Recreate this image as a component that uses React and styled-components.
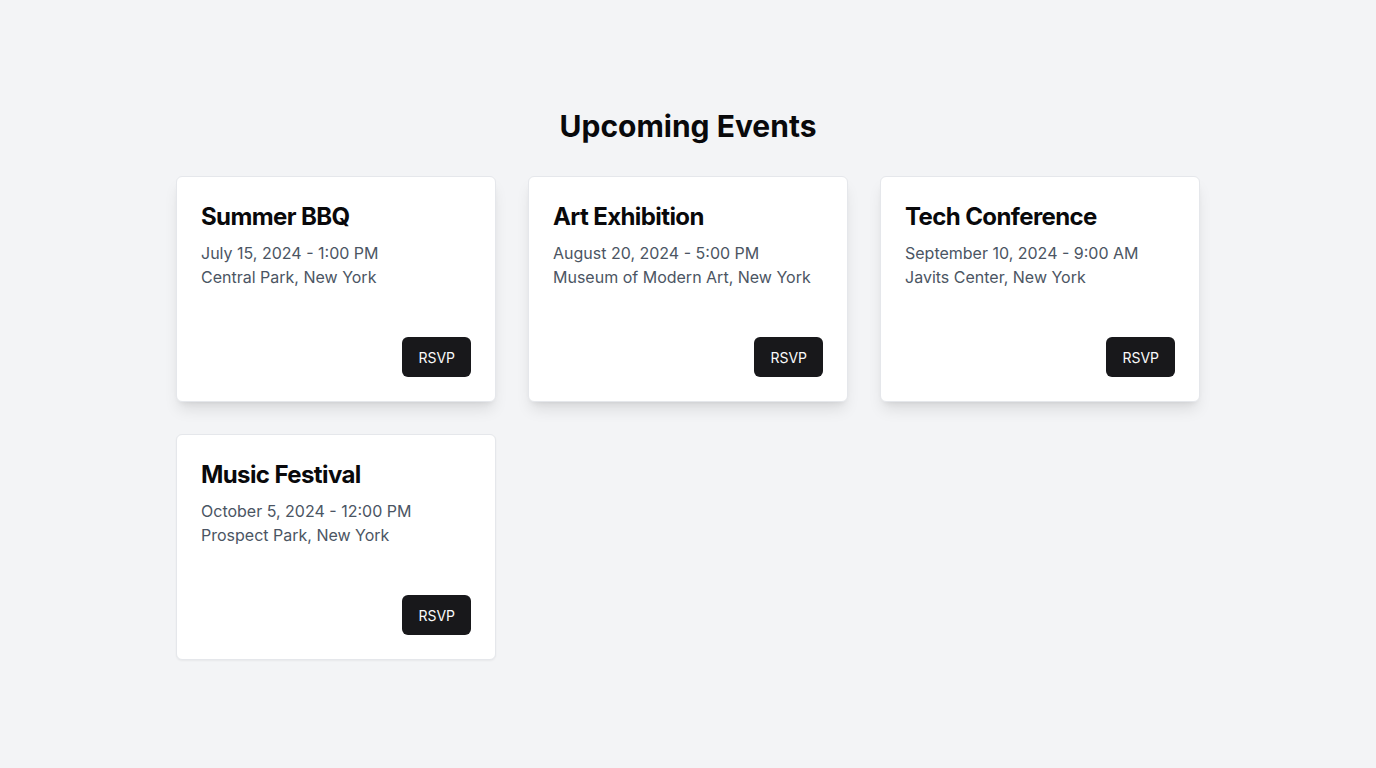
import React from 'react';
import styled, { createGlobalStyle } from 'styled-components';

const events = [
  { title: 'Summer BBQ', date: 'July 15, 2024 - 1:00 PM', place: 'Central Park, New York', raised: true },
  { title: 'Art Exhibition', date: 'August 20, 2024 - 5:00 PM', place: 'Museum of Modern Art, New York', raised: true },
  { title: 'Tech Conference', date: 'September 10, 2024 - 9:00 AM', place: 'Javits Center, New York', raised: true },
  { title: 'Music Festival', date: 'October 5, 2024 - 12:00 PM', place: 'Prospect Park, New York', raised: false },
];

export default function App() {
  return (
    <>
      <GlobalStyle />
      <Page>
        <Heading>Upcoming Events</Heading>
        <Grid>
          {events.map((ev) => (
            <Card key={ev.title} $raised={ev.raised}>
              <Title>{ev.title}</Title>
              <Info>{ev.date}</Info>
              <Info>{ev.place}</Info>
              <Footer>
                <Button>RSVP</Button>
              </Footer>
            </Card>
          ))}
        </Grid>
      </Page>
    </>
  );
}

const GlobalStyle = createGlobalStyle`
  body {
    margin: 0;
    background: #f3f4f6;
    font-family: Inter, 'Liberation Sans', sans-serif;
    -webkit-font-smoothing: antialiased;
  }
`;

const Page = styled.main`
  min-height: 100vh;
  padding: 108px 0 48px;
  box-sizing: border-box;
`;

const Heading = styled.h1`
  margin: 0 0 32px;
  text-align: center;
  font-size: 30px;
  line-height: 36px;
  font-weight: 700;
  letter-spacing: 0;
  color: #09090b;
`;

const Grid = styled.div`
  width: 1024px;
  margin: 0 auto;
  display: grid;
  grid-template-columns: repeat(3, 1fr);
  gap: 32px;
`;

const Card = styled.div`
  display: flex;
  flex-direction: column;
  height: 226px;
  box-sizing: border-box;
  padding: 24px;
  background: #fff;
  border: 1px solid #e5e7eb;
  border-radius: 6px;
  box-shadow: ${(p) =>
    p.$raised
      ? '0 10px 15px -3px rgba(0,0,0,0.1), 0 4px 6px -4px rgba(0,0,0,0.1)'
      : '0 1px 2px 0 rgba(0,0,0,0.05)'};
`;

const Title = styled.h2`
  margin: 0 0 8px;
  font-size: 24px;
  line-height: 32px;
  font-weight: 700;
  letter-spacing: -0.6px;
  color: #09090b;
`;

const Info = styled.p`
  margin: 0;
  font-size: 16px;
  line-height: 24px;
  color: #4b5563;
`;

const Footer = styled.div`
  margin-top: auto;
  display: flex;
  justify-content: flex-end;
`;

const Button = styled.button`
  height: 40px;
  padding: 0 16px;
  border: none;
  border-radius: 6px;
  background: #18181b;
  color: #fafafa;
  font-family: Inter, 'Liberation Sans', sans-serif;
  font-size: 14px;
  font-weight: 400;
  cursor: pointer;
`;
